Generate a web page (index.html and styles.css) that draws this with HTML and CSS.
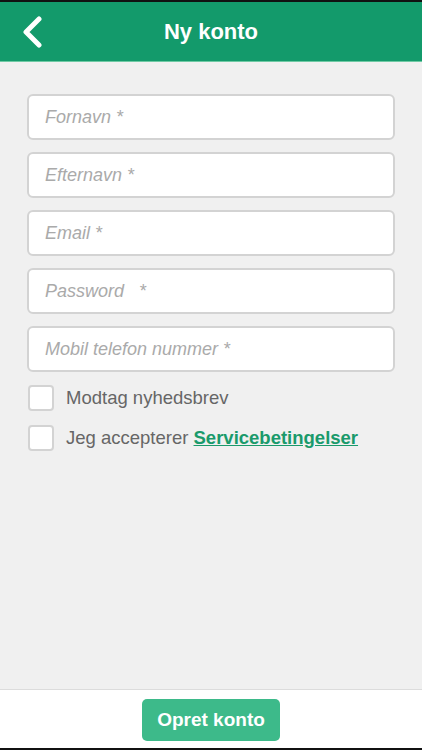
FILE: index.html
```html
<!DOCTYPE html>
<html lang="da">
<head>
    <meta charset="UTF-8">
    <meta name="viewport" content="width=device-width, initial-scale=1.0">
    <title>Ny konto</title>
    <link rel="stylesheet" href="styles.css">
</head>
<body>
    <div class="screen">
        <header class="topbar">
            <a href="#" class="back" aria-label="Tilbage">
                <svg width="24" height="32" viewBox="0 0 24 32">
                    <path d="M18 3 L5 16 L18 29" fill="none" stroke="#fff" stroke-width="5" stroke-linecap="round" stroke-linejoin="round"/>
                </svg>
            </a>
            <h1>Ny konto</h1>
        </header>

        <main class="content">
            <form class="signup">
                <input type="text" class="field" placeholder="Fornavn *">
                <input type="text" class="field" placeholder="Efternavn *">
                <input type="email" class="field" placeholder="Email *">
                <input type="password" class="field" placeholder="Password &nbsp;&nbsp;*">
                <input type="tel" class="field" placeholder="Mobil telefon nummer *">

                <label class="check">
                    <span class="box"></span>
                    Modtag nyhedsbrev
                </label>
                <label class="check">
                    <span class="box"></span>
                    <span>Jeg accepterer <a href="#" class="terms">Servicebetingelser</a></span>
                </label>
            </form>
        </main>

        <footer class="bottombar">
            <button class="btn">Opret konto</button>
        </footer>
    </div>
</body>
</html>
```

FILE: styles.css
```css
html, body {
    margin: 0;
    padding: 0;
    height: 100%;
}
body {
    font-family: 'Liberation Sans', Arial, sans-serif;
    background: #111;
}
.screen {
    display: flex;
    flex-direction: column;
    height: 746px;
    margin-top: 2px;
    background: #f0f0f0;
}
.topbar {
    height: 59px;
    background: #139a6b;
    border-bottom: 1px solid #6fcaa4;
    display: flex;
    align-items: center;
    justify-content: center;
    position: relative;
}
.back {
    position: absolute;
    left: 21px;
    top: 14px;
    display: block;
}
.topbar h1 {
    margin: 0;
    color: #fff;
    font-size: 22px;
    font-weight: bold;
}
.content {
    flex: 1;
    padding: 32px 27px 0;
}
.signup {
    display: flex;
    flex-direction: column;
    gap: 12px;
}
.field {
    box-sizing: border-box;
    width: 368px;
    height: 46px;
    border: 2px solid #d3d3d3;
    border-radius: 6px;
    background: #fff;
    padding: 0 16px;
    font-family: inherit;
    font-size: 18px;
    font-style: italic;
    color: #444;
}
.field::placeholder {
    color: #aaa;
}
.check {
    display: flex;
    align-items: center;
    gap: 12px;
    font-size: 18.5px;
    color: #666;
    height: 26px;
    margin-left: 1px;
    padding-top: 1px;
}
.check + .check {
    margin-top: 1px;
}
.box {
    box-sizing: border-box;
    width: 26px;
    height: 26px;
    border: 2px solid #d3d3d3;
    border-radius: 4px;
    background: #fff;
}
.terms {
    color: #1a9a6b;
    font-weight: bold;
    text-decoration: underline;
}
.bottombar {
    height: 59px;
    background: #fff;
    border-top: 1px solid #dcdcdc;
    display: flex;
    justify-content: center;
    padding-top: 9px;
    box-sizing: border-box;
}
.btn {
    width: 138px;
    height: 42px;
    background: #3dba8a;
    color: #fff;
    border: none;
    border-radius: 5px;
    font-family: inherit;
    font-size: 19px;
    font-weight: bold;
}
```
